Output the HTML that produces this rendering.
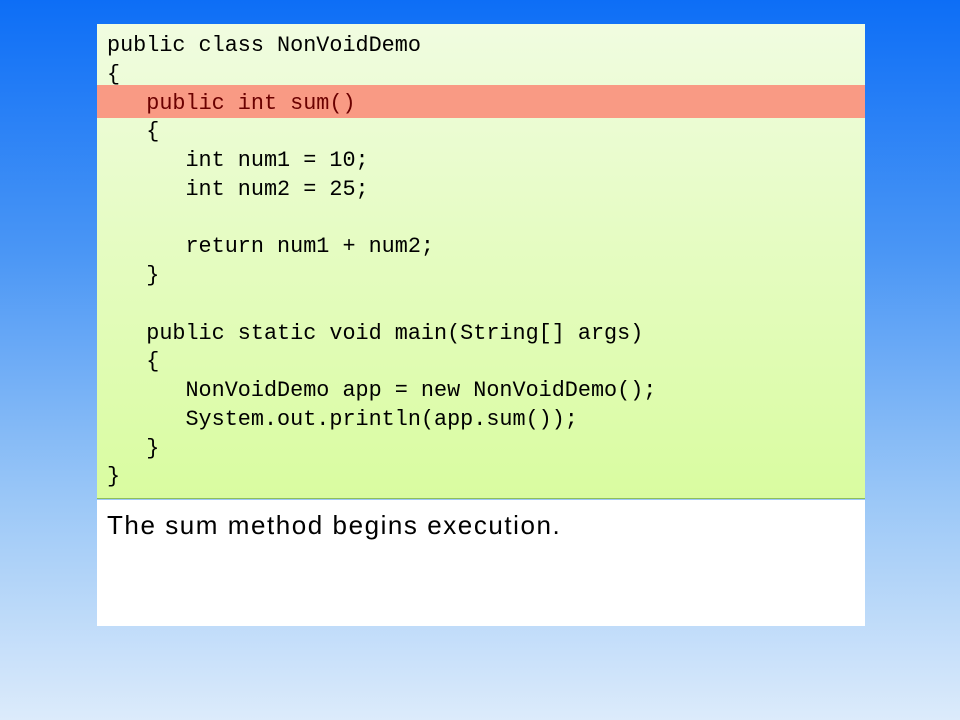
<!DOCTYPE html>
<html><head><style>
html,body{margin:0;padding:0}
body{width:960px;height:720px;position:relative;overflow:hidden;background:linear-gradient(#0d6ef6 0%,#4a96f5 35%,#9cc8f7 70%,#dcebfb 100%)}
#code{position:absolute;left:97px;top:24px;width:768px;height:475px;background:linear-gradient(#f0fce0,#d9fca0);border-bottom:1px solid #8fbf5a;box-sizing:border-box}
#hl{position:absolute;left:97px;top:85px;width:768px;height:33px;background:#f99a84}
pre{position:absolute;left:107px;top:32px;margin:0;font-family:"Liberation Mono",monospace;font-size:21.8px;line-height:28.75px;color:#000}
.r{color:#6b0000}
#cap{position:absolute;left:97px;top:500px;width:768px;height:126px;background:#fff}
#cap span{position:absolute;left:10px;top:10px;font-family:"Liberation Sans",sans-serif;font-size:26px;letter-spacing:1.55px;color:#000;white-space:nowrap}
</style></head><body>
<div id="code"></div>
<div id="hl"></div>
<pre>public class NonVoidDemo
{
   <span class="r">public int sum()</span>
   {
      int num1 = 10;
      int num2 = 25;

      return num1 + num2;
   }

   public static void main(String[] args)
   {
      NonVoidDemo app = new NonVoidDemo();
      System.out.println(app.sum());
   }
}</pre>
<div id="cap"><span>The sum method begins execution.</span></div>
</body></html>
